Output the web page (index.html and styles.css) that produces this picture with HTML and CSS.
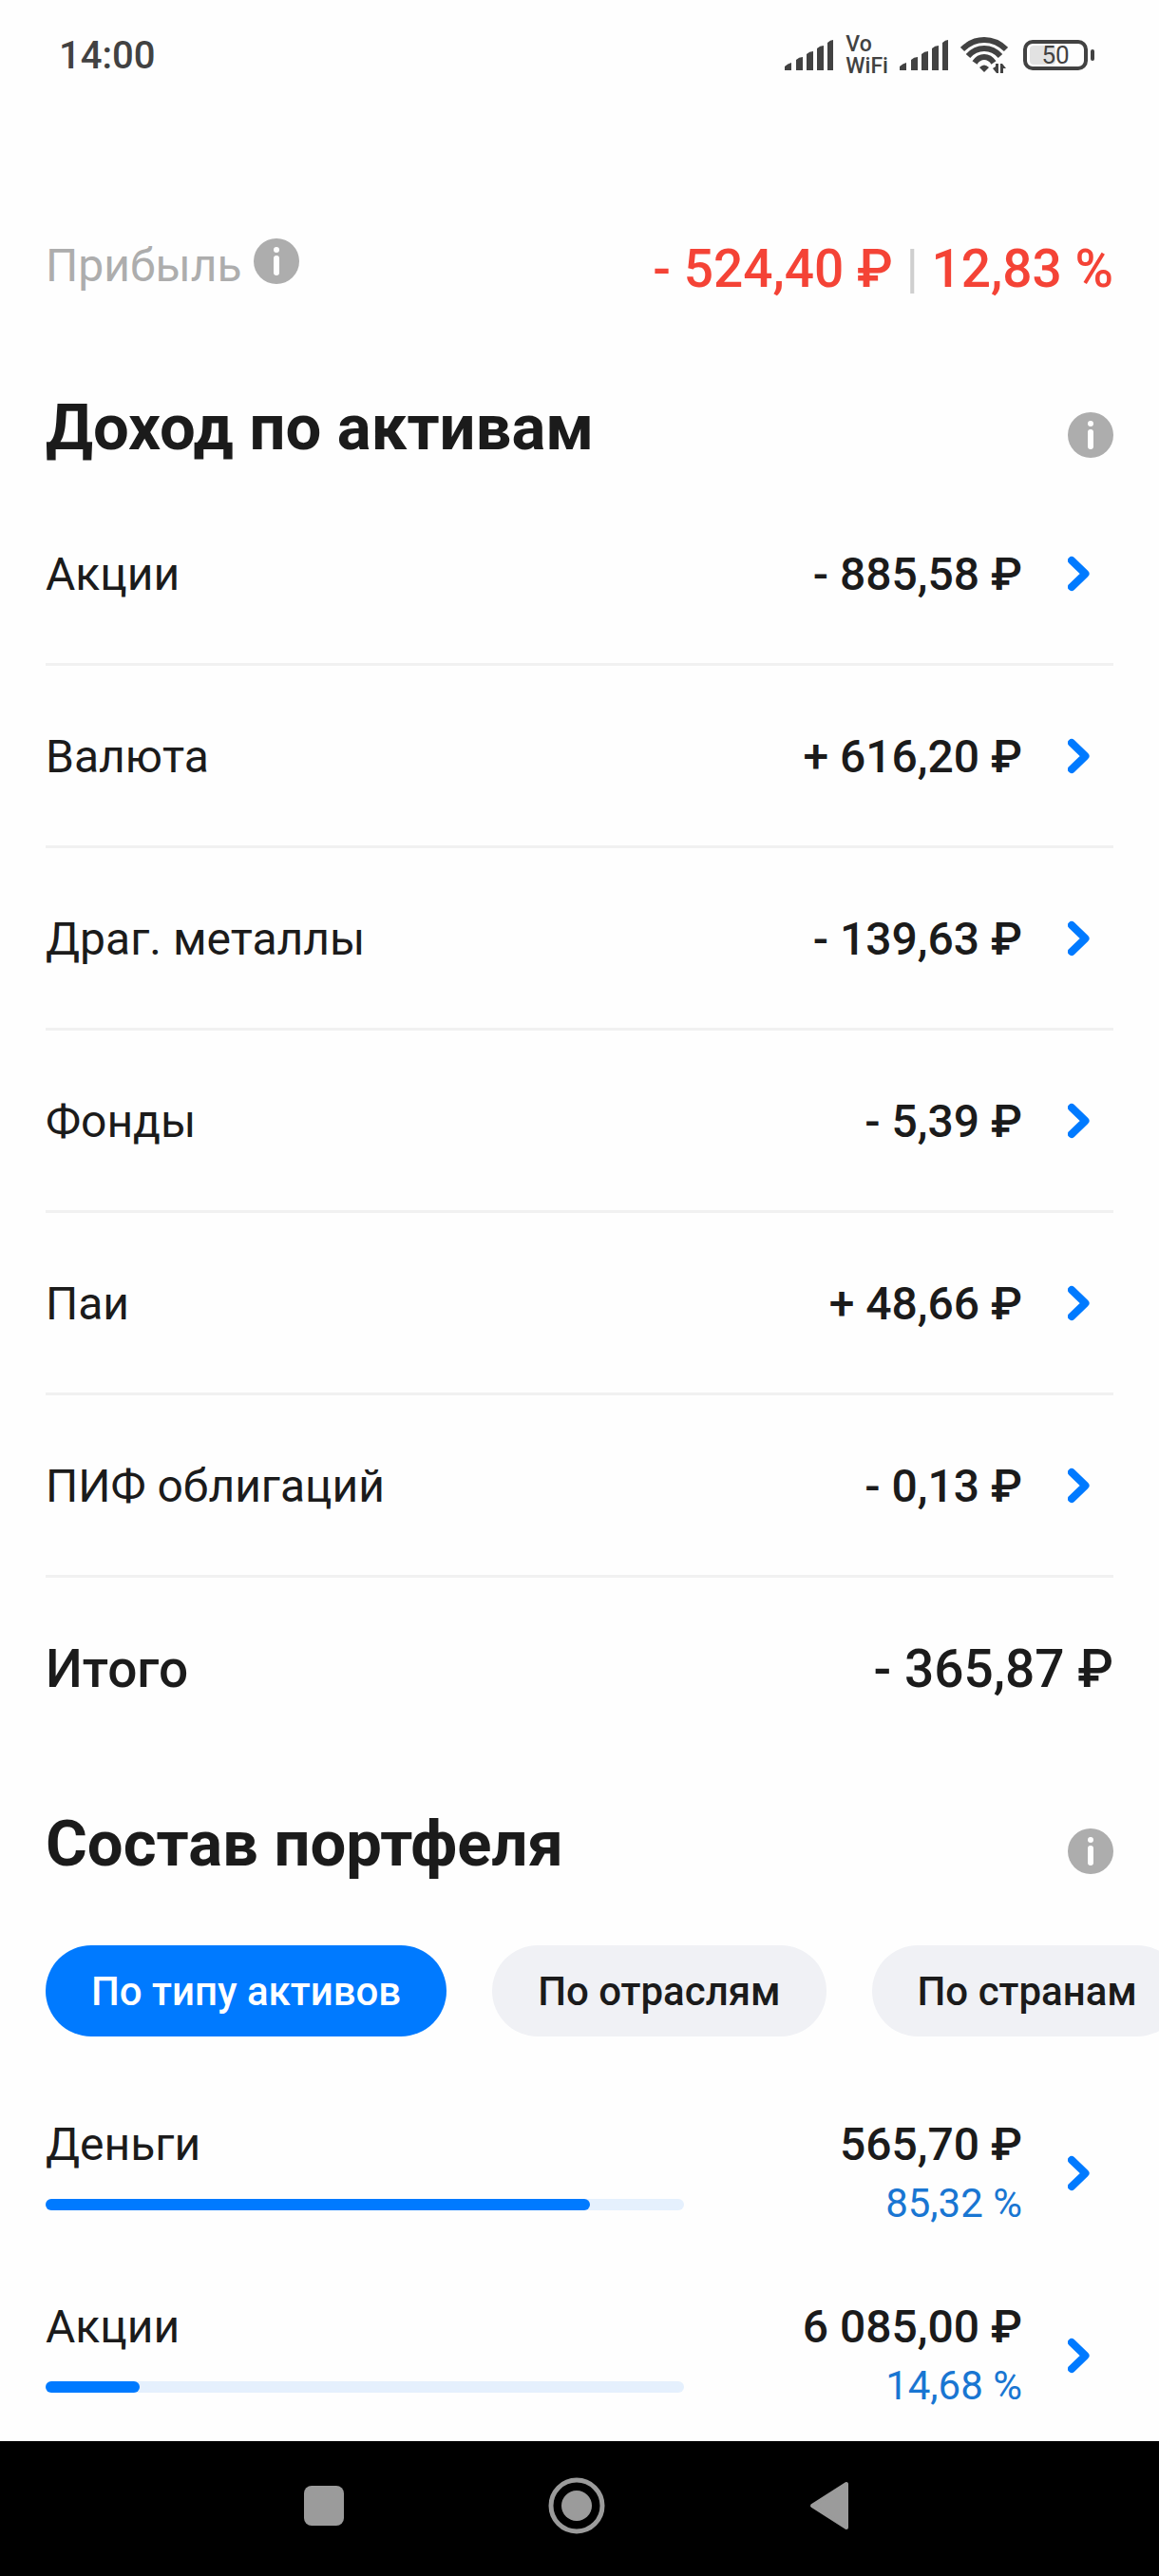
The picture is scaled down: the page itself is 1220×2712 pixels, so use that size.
FILE: index.html
```html
<!DOCTYPE html>
<html lang="ru">
<head>
    <meta charset="UTF-8">
    <meta name="viewport" content="width=device-width, initial-scale=1.0">
    <title>Портфель</title>
    <link rel="stylesheet" href="styles.css">
</head>
<body>
    <!-- Shared icons -->
    <svg class="sprite" aria-hidden="true">
        <symbol id="icon-info" viewBox="0 0 48 48">
            <circle cx="24" cy="24" r="24" fill="#adadad"/>
            <circle cx="24" cy="12" r="3" fill="#fff"/>
            <rect x="21" y="18" width="6" height="21" rx="3" fill="#fff"/>
        </symbol>
        <symbol id="icon-chevron" viewBox="0 0 48 48">
            <path d="M4 10L18.5 24L4 38" fill="none" stroke="#007aff" stroke-width="8" stroke-linecap="round" stroke-linejoin="round"/>
        </symbol>
        <symbol id="icon-signal" viewBox="0 0 52 32">
            <path d="M0 32V28Q3 25 7 24V32ZM12 32V21Q15 18 19 18V32ZM23 32V15Q26 12 30 12V32ZM34 32V9Q37 6 41 6V32ZM45 32V3Q48 0 51 0V32Z" fill="#424242"/>
        </symbol>
    </svg>

    <div class="screen">
        <header class="status-bar">
            <span class="time">14:00</span>
            <div class="status-icons">
                <svg class="signal"><use href="#icon-signal"/></svg>
                <span class="vowifi"><span>Vo</span><span>WiFi</span></span>
                <svg class="signal"><use href="#icon-signal"/></svg>
                <svg class="wifi" viewBox="0 0 50 38">
                    <g fill="none" stroke="#424242" stroke-width="6">
                        <path d="M2 13Q12 3 25 3T48 13"/>
                        <path d="M8 20Q15 12 25 12T42 20"/>
                        <path d="M15 27Q19 21 25 21T35 27"/>
                    </g>
                    <path d="M20 32Q25 27 30 32L25 37Z" fill="#424242"/>
                    <path d="M34 33L37 31V28H40V38H38ZM42 28H44L48 33H45V38H42Z" fill="#424242"/>
                </svg>
                <span class="battery"><span class="battery-level"></span><span class="battery-text">50</span></span>
            </div>
        </header>

        <main>
            <div class="profit">
                <div class="profit-label">
                    <span>Прибыль</span>
                    <button class="info" aria-label="О прибыли"><svg><use href="#icon-info"/></svg></button>
                </div>
                <div class="profit-value">- 524,40 ₽ <span class="divider">|</span> 12,83 %</div>
            </div>

            <section>
                <div class="section-head">
                    <h2>Доход по активам</h2>
                    <button class="info" aria-label="О доходе по активам"><svg><use href="#icon-info"/></svg></button>
                </div>
                <ul class="income">
                    <li><a href="#" class="row"><span class="name">Акции</span><span class="amount">- 885,58 ₽</span><svg class="chevron"><use href="#icon-chevron"/></svg></a></li>
                    <li><a href="#" class="row"><span class="name">Валюта</span><span class="amount">+ 616,20 ₽</span><svg class="chevron"><use href="#icon-chevron"/></svg></a></li>
                    <li><a href="#" class="row"><span class="name">Драг. металлы</span><span class="amount">- 139,63 ₽</span><svg class="chevron"><use href="#icon-chevron"/></svg></a></li>
                    <li><a href="#" class="row"><span class="name">Фонды</span><span class="amount">- 5,39 ₽</span><svg class="chevron"><use href="#icon-chevron"/></svg></a></li>
                    <li><a href="#" class="row"><span class="name">Паи</span><span class="amount">+ 48,66 ₽</span><svg class="chevron"><use href="#icon-chevron"/></svg></a></li>
                    <li><a href="#" class="row"><span class="name">ПИФ облигаций</span><span class="amount">- 0,13 ₽</span><svg class="chevron"><use href="#icon-chevron"/></svg></a></li>
                </ul>
                <div class="total">
                    <span>Итого</span>
                    <span>- 365,87 ₽</span>
                </div>
            </section>

            <section>
                <div class="section-head">
                    <h2>Состав портфеля</h2>
                    <button class="info" aria-label="О составе портфеля"><svg><use href="#icon-info"/></svg></button>
                </div>
                <div class="chips">
                    <button class="chip active">По типу активов</button>
                    <button class="chip">По отраслям</button>
                    <button class="chip">По странам</button>
                </div>
                <ul class="shares">
                    <li>
                        <a href="#" class="row">
                            <div class="share">
                                <span class="name">Деньги</span>
                                <div class="bar"><div class="bar-fill" style="width: 85.32%"></div></div>
                            </div>
                            <div class="share-value">
                                <span class="amount">565,70 ₽</span>
                                <span class="percent">85,32 %</span>
                            </div>
                            <svg class="chevron"><use href="#icon-chevron"/></svg>
                        </a>
                    </li>
                    <li>
                        <a href="#" class="row">
                            <div class="share">
                                <span class="name">Акции</span>
                                <div class="bar"><div class="bar-fill" style="width: 14.68%"></div></div>
                            </div>
                            <div class="share-value">
                                <span class="amount">6 085,00 ₽</span>
                                <span class="percent">14,68 %</span>
                            </div>
                            <svg class="chevron"><use href="#icon-chevron"/></svg>
                        </a>
                    </li>
                </ul>
            </section>
        </main>

        <nav class="nav-bar">
            <button aria-label="Недавние"><svg viewBox="0 0 60 60"><rect x="9" y="9" width="42" height="42" rx="8" fill="#9b9b9b"/></svg></button>
            <button aria-label="Домой"><svg viewBox="0 0 60 60"><circle cx="30" cy="30" r="27" fill="none" stroke="#9b9b9b" stroke-width="5"/><circle cx="30" cy="30" r="16" fill="#9b9b9b"/></svg></button>
            <button aria-label="Назад"><svg viewBox="0 0 60 60"><path d="M12 30L48 7V53Z" fill="#9b9b9b" stroke="#9b9b9b" stroke-width="4" stroke-linejoin="round"/></svg></button>
        </nav>
    </div>
</body>
</html>
```
FILE: styles.css
```css
* {
    box-sizing: border-box;
}
body {
    margin: 0;
    font-family: Roboto, sans-serif;
    font-size: 48px;
    line-height: 56px;
    color: #1b1b1b;
    background-color: #fefefe;
}
button {
    border: none;
    padding: 0;
    background: none;
    font-family: inherit;
    cursor: pointer;
}
svg {
    display: block;
}
ul {
    list-style: none;
    margin: 0;
    padding: 0;
}
a {
    color: inherit;
    text-decoration: none;
}
.sprite {
    position: absolute;
    width: 0;
    height: 0;
}
.screen {
    display: flex;
    flex-direction: column;
    min-height: 100vh;
    overflow: hidden;
}

/* Status bar */
.status-bar {
    display: flex;
    justify-content: space-between;
    align-items: center;
    height: 118px;
    padding: 0 68px 0 62px;
    color: #424242;
}
.time {
    font-size: 40px;
    font-weight: 500;
}
.status-icons {
    display: flex;
    align-items: center;
    gap: 12px;
    padding-bottom: 2px;
}
.signal {
    width: 52px;
    height: 32px;
}
.vowifi {
    display: flex;
    flex-direction: column;
    font-size: 23px;
    font-weight: 500;
    line-height: 23px;
}
.wifi {
    width: 50px;
    height: 38px;
}
.battery {
    position: relative;
    display: flex;
    align-items: center;
    justify-content: center;
    width: 68px;
    height: 32px;
    margin: 0 7px 0 4px;
    border: 4px solid #424242;
    border-radius: 10px;
}
.battery::after {
    content: "";
    position: absolute;
    left: 67px;
    top: 6px;
    width: 4px;
    height: 12px;
    border-radius: 2px;
    background-color: #424242;
}
.battery-level {
    position: absolute;
    left: 3px;
    top: 2px;
    width: 27px;
    height: 20px;
    border-radius: 4px;
    background-color: #e2e2e2;
}
.battery-text {
    position: relative;
    font-size: 26px;
    line-height: 26px;
}

main {
    flex: 1;
    padding: 133px 48px 0;
}
.info svg {
    width: 48px;
    height: 48px;
}

/* Profit */
.profit {
    display: flex;
    justify-content: space-between;
    align-items: flex-start;
    padding-bottom: 47px;
}
.profit-label {
    display: flex;
    align-items: flex-start;
    gap: 12px;
    line-height: 58px;
    color: #adadad;
}
.profit-value {
    font-size: 55px;
    font-weight: 500;
    line-height: 64px;
    color: #f44336;
}
.divider {
    font-weight: 400;
    color: #cfcfcf;
}

/* Sections */
.section-head {
    display: flex;
    justify-content: space-between;
    align-items: flex-end;
    padding-top: 56px;
}
h2 {
    margin: 0;
    font-size: 67px;
    font-weight: 700;
    line-height: 64px;
}
.row {
    display: flex;
    align-items: center;
    gap: 48px;
}
.chevron {
    width: 48px;
    height: 48px;
}
.name, .amount {
    padding-top: 2px;
}
.amount {
    font-weight: 500;
}
.income {
    padding-top: 27px;
}
.income .row {
    height: 192px;
    border-bottom: 3px solid #f1f1f1;
}
.income .name {
    flex: 1;
}
.total {
    display: flex;
    justify-content: space-between;
    align-items: center;
    height: 192px;
    font-size: 55px;
    font-weight: 500;
}

/* Portfolio */
.chips {
    display: flex;
    gap: 48px;
    margin: 75px -48px 48px 0;
    overflow: hidden;
}
.chip {
    flex-shrink: 0;
    height: 96px;
    padding: 0 48px;
    border-radius: 48px;
    font-size: 42px;
    font-weight: 500;
    color: #1b1b1b;
    background-color: #f0f1f5;
}
.chip.active {
    color: #ffffff;
    background-color: #007aff;
}
.shares {
    display: flex;
    flex-direction: column;
    gap: 72px;
    padding-top: 36px;
}
.shares .row {
    gap: 0;
    height: 120px;
}
.share {
    flex: 1;
    display: flex;
    flex-direction: column;
    gap: 29px;
    align-self: flex-start;
}
.bar {
    height: 12px;
    border-radius: 6px;
    background-color: #e5f0fd;
}
.bar-fill {
    height: 12px;
    border-radius: 6px;
    background-color: #007aff;
}
.share-value {
    display: flex;
    flex-direction: column;
    gap: 10px;
    align-self: flex-start;
    align-items: flex-end;
    width: 404px;
    padding-right: 48px;
}
.percent {
    font-size: 42px;
    line-height: 48px;
    color: #1976d2;
}

/* Navigation */
.nav-bar {
    display: flex;
    justify-content: center;
    align-items: center;
    gap: 206px;
    height: 142px;
    padding: 0 6px 6px 0;
    background-color: #000000;
}
.nav-bar svg {
    width: 60px;
    height: 60px;
}
```
